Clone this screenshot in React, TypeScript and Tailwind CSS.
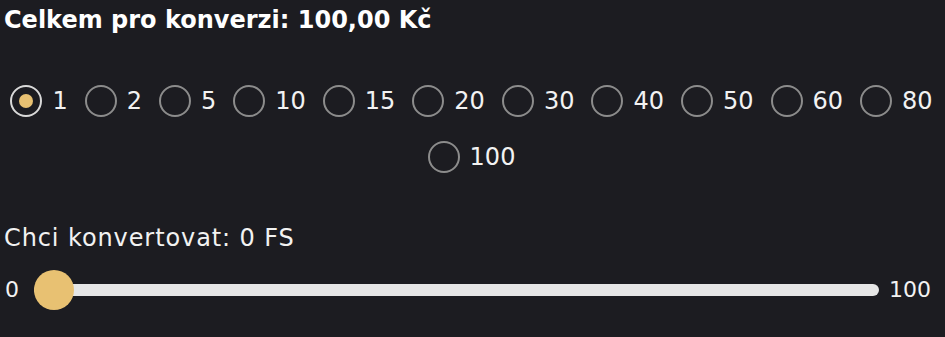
import React, { useState } from 'react';

const amounts = [1, 2, 5, 10, 15, 20, 30, 40, 50, 60, 80, 100];

export default function App() {
  const [selected, setSelected] = useState(1);
  const [value, setValue] = useState(0);

  return (
    <div className="min-h-[337px] w-full bg-[#1c1c21] pl-[4px] pr-[6px] pt-[6px] text-white font-['DejaVu_Sans','Inter',sans-serif]">
      <h2 className="text-[24px] font-bold leading-[28px]">Celkem pro konverzi: 100,00 Kč</h2>

      <div className="mt-[51px] flex flex-wrap justify-center gap-x-[17px] gap-y-[24px]">
        {amounts.map((a) => {
          const active = a === selected;
          return (
            <label key={a} className="flex cursor-pointer items-center" onClick={() => setSelected(a)}>
              <span
                className={`flex h-[32px] w-[32px] items-center justify-center rounded-full border-2 ${
                  active ? 'border-[#d9d9d9]' : 'border-[#8c8c8c]'
                }`}
              >
                {active && <span className="h-[14px] w-[14px] rounded-full bg-[#e8c172]" />}
              </span>
              <span className="ml-[10px] text-[24px] leading-[24px] text-[#f2f2f2]">{a}</span>
            </label>
          );
        })}
      </div>

      <p className="mt-[50px] text-[24px] leading-[30px] tracking-[0.9px] text-[#f2f2f2]">
        Chci konvertovat: {value} FS
      </p>

      <div className="mt-[17px] flex items-center pr-[8px]">
        <span className="w-[30px] pl-[1px] text-[22px] leading-[24px] text-[#f2f2f2]">0</span>
        <div className="relative flex h-[40px] flex-1 items-center">
          <div className="h-[12px] w-full rounded-full bg-[#e6e6e6]" />
          <div
            className="absolute top-0 h-[40px] w-[40px] rounded-full bg-[#e8c172]"
            style={{ left: `calc(${value}% - ${(value / 100) * 40}px)` }}
            onClick={() => setValue(value)}
          />
        </div>
        <span className="ml-[10px] text-[22px] leading-[24px] text-[#f2f2f2]">100</span>
      </div>
    </div>
  );
}
